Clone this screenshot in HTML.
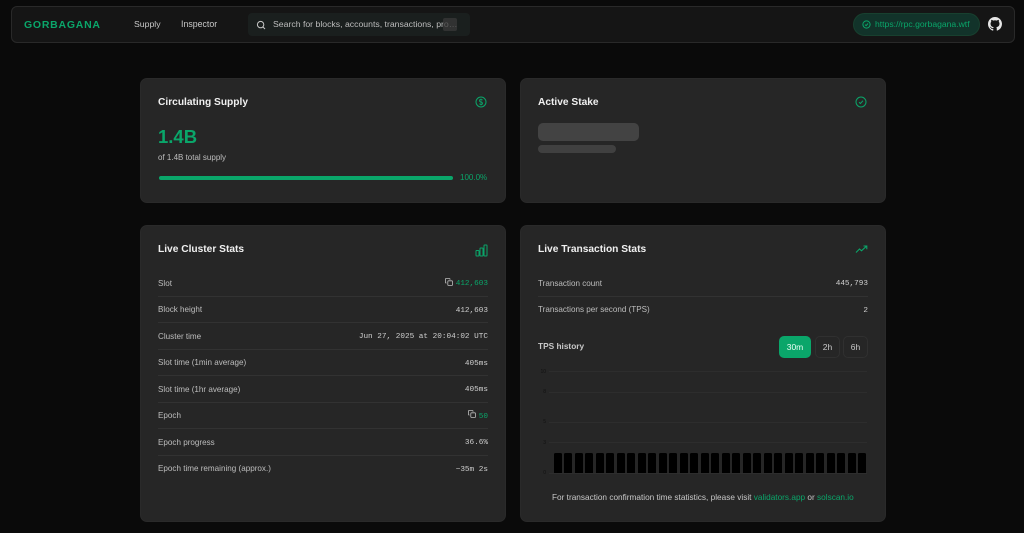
<!DOCTYPE html>
<html lang="en"><head><meta charset="utf-8"><title>Gorbagana</title>
<style>
*{box-sizing:border-box;margin:0;padding:0}
html,body{width:1024px;height:533px;overflow:hidden;background:#0a0a0a}
body{position:relative;font-family:"Liberation Sans",sans-serif;color:#c8c8c8}
.a{position:absolute;white-space:nowrap}
.card{position:absolute;width:366px;background:#262626;border:1px solid #2a2a2a;border-radius:7px}
.nav{position:absolute;left:11px;top:6px;width:1004px;height:37px;background:#151515;border:1px solid #292929;border-radius:6px}
.t{font-size:10.2px;font-weight:700;color:#f0f0f0;line-height:12px;margin-top:1px}
.l{font-size:8.1px;color:#bdbdbd;line-height:10px;margin-top:1px}
.v{font-family:"Liberation Mono",monospace;font-size:7.7px;color:#d0d0d0;line-height:10px;text-align:right;margin-top:1px}
.g{color:#0aa66a}
.hr{position:absolute;height:1px;background:#323232}
.gl{position:absolute;left:549px;width:318px;height:1px;background:#2d2d2d}
.yl{position:absolute;font-size:5px;color:#111;line-height:6px;width:10px;text-align:right;left:536px}
.btn{position:absolute;top:336px;height:22px;border:1px solid #303030;border-radius:5px;font-size:8.5px;line-height:20px;text-align:center;color:#c8c8c8}
.bar{position:absolute;top:453px;width:8px;height:20px;background:#000;border-radius:1.5px 1.5px 0 0}
svg{position:absolute;fill:none}
</style></head><body>

<div class="nav"></div>
<div class="a" style="left:24px;top:19px;font-size:10.5px;line-height:12px;font-weight:700;letter-spacing:.75px;color:#0aa66a">GORBAGANA</div>
<div class="a" style="left:134px;top:19px;font-size:8.7px;line-height:11px;color:#c8c8c8">Supply</div>
<div class="a" style="left:181px;top:19px;font-size:8.8px;line-height:11px;color:#c8c8c8">Inspector</div>
<div class="a" style="left:248px;top:13px;width:222px;height:23px;background:#1a1f1e;border-radius:4px"></div>
<svg style="left:256px;top:20px" width="10" height="10" viewBox="0 0 10 10" stroke="#c8c8c8" stroke-width="1"><circle cx="4.6" cy="4.6" r="3.2"/><path d="M7 7l2 2"/></svg>
<div class="a" style="left:273px;top:19px;font-size:8.7px;line-height:11px;color:#bdbdbd;width:184px;overflow:hidden">Search for blocks, accounts, transactions, pro…</div>
<div class="a" style="left:443px;top:18px;width:14px;height:13px;background:#3a3a3a;opacity:.75;border-radius:2px"></div>

<div class="a" style="left:853px;top:13px;width:127px;height:23px;background:#12332a;border:1px solid #18402f;border-radius:12px"></div>
<svg style="left:862px;top:20px" width="9" height="9" viewBox="0 0 9 9" stroke="#0aa66a" stroke-width="1"><circle cx="4.5" cy="4.5" r="3.6"/><path d="M3 4.6l1.1 1.1L6 3.5"/></svg>
<div class="a g" style="left:875px;top:19px;font-size:8.6px;line-height:11px">https://rpc.gorbagana.wtf</div>
<svg style="left:988px;top:17px;fill:#e6e6e6" width="14" height="14" viewBox="0 0 16 16"><path d="M8 0C3.58 0 0 3.58 0 8c0 3.54 2.29 6.53 5.47 7.59.4.07.55-.17.55-.38 0-.19-.01-.82-.01-1.49-2.01.37-2.53-.49-2.69-.94-.09-.23-.48-.94-.82-1.13-.28-.15-.68-.52-.01-.53.63-.01 1.08.58 1.23.82.72 1.21 1.87.87 2.33.66.07-.52.28-.87.51-1.07-1.78-.2-3.64-.89-3.64-3.95 0-.87.31-1.59.82-2.15-.08-.2-.36-1.02.08-2.12 0 0 .67-.21 2.2.82.64-.18 1.32-.27 2-.27s1.36.09 2 .27c1.53-1.04 2.2-.82 2.2-.82.44 1.1.16 1.92.08 2.12.51.56.82 1.27.82 2.15 0 3.07-1.87 3.75-3.65 3.95.29.25.54.73.54 1.48 0 1.07-.01 1.93-.01 2.2 0 .21.15.46.55.38A8.01 8.01 0 0016 8c0-4.42-3.58-8-8-8z"/></svg>

<!-- Circulating Supply -->
<div class="card" style="left:140px;top:78px;height:125px"></div>
<div class="a t" style="left:158px;top:96px">Circulating Supply</div>
<svg style="left:475px;top:96px" width="12" height="12" viewBox="0 0 12 12" stroke="#0aa66a" stroke-width="1"><circle cx="6" cy="6" r="5"/><path d="M7.6 4.2C7.2 3.6 6.6 3.4 6 3.4c-1 0-1.6.5-1.6 1.3C4.4 6.4 7.6 5.600 7.600 7.300c0 .8-.7 1.300-1.600 1.300-.7 0-1.300-.3-1.700-.9M6 2.600v6.800" stroke-width=".8"/></svg>
<div class="a g" style="left:158px;top:126px;font-size:18.5px;line-height:21px;font-weight:700">1.4B</div>
<div class="a" style="left:158px;top:153px;font-size:8px;line-height:10px;color:#bdbdbd">of 1.4B total supply</div>
<div class="a" style="left:159px;top:176px;width:294px;height:4px;background:#0aa66a;border-radius:2px"></div>
<div class="a g" style="left:460px;top:173px;font-size:8px;line-height:10px">100.0%</div>

<!-- Active Stake -->
<div class="card" style="left:520px;top:78px;height:125px"></div>
<div class="a t" style="left:538px;top:96px">Active Stake</div>
<svg style="left:855px;top:96px" width="12" height="12" viewBox="0 0 12 12" stroke="#0aa66a" stroke-width="1"><circle cx="6" cy="6" r="5"/><path d="M4 6.200l1.400 1.300L8 4.700"/></svg>
<div class="a" style="left:538px;top:123px;width:101px;height:18px;background:#434343;border-radius:5px"></div>
<div class="a" style="left:538px;top:145px;width:78px;height:8px;background:#404040;border-radius:4px"></div>

<!-- Live Cluster -->
<div class="card" style="left:140px;top:225px;height:297px"></div>
<div class="a t" style="left:158px;top:243px">Live Cluster Stats</div>
<svg style="left:475px;top:244px" width="13" height="13" viewBox="0 0 13 13" stroke="#0aa66a" stroke-width="1"><rect x="1" y="6.500" width="3" height="5.500" rx=".6"/><rect x="5" y="4" width="3" height="8" rx=".6"/><rect x="9" y="1" width="3" height="11" rx=".6"/></svg>

<div class="a l" style="left:158px;top:278px">Slot</div>
<svg style="left:445px;top:278px" width="8" height="8" viewBox="0 0 8 8" stroke="#bdbdbd" stroke-width=".8"><rect x="2.800" y="2.800" width="4.700" height="4.700" rx=".8"/><path d="M1.500 5H1a.6.6 0 01-.6-.6V1A.6.6 0 011 .5h3.400a.6.6 0 01.6.6v.6"/></svg>
<div class="a v" style="right:536px;top:278px;color:#0aa66a">412,603</div>
<div class="hr" style="left:158px;width:330px;top:296px"></div>

<div class="a l" style="left:158px;top:304px">Block height</div>
<div class="a v" style="right:536px;top:305px">412,603</div>
<div class="hr" style="left:158px;width:330px;top:322px"></div>

<div class="a l" style="left:158px;top:331px">Cluster time</div>
<div class="a v" style="right:536px;top:331px">Jun 27, 2025 at 20:04:02 UTC</div>
<div class="hr" style="left:158px;width:330px;top:349px"></div>

<div class="a l" style="left:158px;top:357px">Slot time (1min average)</div>
<div class="a v" style="right:536px;top:358px">405ms</div>
<div class="hr" style="left:158px;width:330px;top:375px"></div>

<div class="a l" style="left:158px;top:384px">Slot time (1hr average)</div>
<div class="a v" style="right:536px;top:384px">405ms</div>
<div class="hr" style="left:158px;width:330px;top:402px"></div>

<div class="a l" style="left:158px;top:410px">Epoch</div>
<svg style="left:468px;top:410px" width="8" height="8" viewBox="0 0 8 8" stroke="#bdbdbd" stroke-width=".8"><rect x="2.800" y="2.800" width="4.700" height="4.700" rx=".8"/><path d="M1.500 5H1a.6.6 0 01-.6-.6V1A.6.6 0 011 .5h3.400a.6.6 0 01.6.6v.6"/></svg>
<div class="a v" style="right:536px;top:411px;color:#0aa66a">50</div>
<div class="hr" style="left:158px;width:330px;top:428px"></div>

<div class="a l" style="left:158px;top:437px">Epoch progress</div>
<div class="a v" style="right:536px;top:437px">36.6%</div>
<div class="hr" style="left:158px;width:330px;top:455px"></div>

<div class="a l" style="left:158px;top:463px">Epoch time remaining (approx.)</div>
<div class="a v" style="right:536px;top:464px">~35m 2s</div>

<!-- Live Tx -->
<div class="card" style="left:520px;top:225px;height:297px"></div>
<div class="a t" style="left:538px;top:243px">Live Transaction Stats</div>
<svg style="left:855px;top:245px" width="13" height="9" viewBox="0 0 13 9" stroke="#0aa66a" stroke-width="1.100"><path d="M1 7.500l3.500-3.500 2 1.800L11.500 1.200M8.500 1h3.300v3.200"/></svg>

<div class="a l" style="left:538px;top:278px">Transaction count</div>
<div class="a v" style="right:156px;top:278px">445,793</div>
<div class="hr" style="left:538px;width:330px;top:296px"></div>
<div class="a l" style="left:538px;top:304px">Transactions per second (TPS)</div>
<div class="a v" style="right:156px;top:305px">2</div>

<div class="a" style="left:538px;top:341px;font-size:8.3px;font-weight:700;line-height:11px;color:#c8c8c8">TPS history</div>
<div class="btn" style="left:779px;width:32px;background:#0aa66a;border-color:#0aa66a;color:#eafff5">30m</div>
<div class="btn" style="left:815px;width:25px">2h</div>
<div class="btn" style="left:843px;width:25px">6h</div>

<div class="gl" style="top:371px"></div>
<div class="gl" style="top:392px"></div>
<div class="gl" style="top:422px"></div>
<div class="gl" style="top:442px"></div>
<div class="gl" style="top:473px"></div>
<div class="yl" style="top:369px">10</div>
<div class="yl" style="top:389px">8</div>
<div class="yl" style="top:419px">5</div>
<div class="yl" style="top:440px">3</div>
<div class="yl" style="top:470px">0</div>

<div class="bar" style="left:553.5px"></div><div class="bar" style="left:564px"></div><div class="bar" style="left:574.5px"></div><div class="bar" style="left:585px"></div><div class="bar" style="left:595.5px"></div><div class="bar" style="left:606px"></div><div class="bar" style="left:616.5px"></div><div class="bar" style="left:627px"></div><div class="bar" style="left:637.5px"></div><div class="bar" style="left:648px"></div><div class="bar" style="left:658.5px"></div><div class="bar" style="left:669px"></div><div class="bar" style="left:679.5px"></div><div class="bar" style="left:690px"></div><div class="bar" style="left:700.5px"></div><div class="bar" style="left:711px"></div><div class="bar" style="left:721.5px"></div><div class="bar" style="left:732px"></div><div class="bar" style="left:742.5px"></div><div class="bar" style="left:753px"></div><div class="bar" style="left:763.5px"></div><div class="bar" style="left:774px"></div><div class="bar" style="left:784.5px"></div><div class="bar" style="left:795px"></div><div class="bar" style="left:805.5px"></div><div class="bar" style="left:816px"></div><div class="bar" style="left:826.500px"></div><div class="bar" style="left:837px"></div><div class="bar" style="left:847.500px"></div><div class="bar" style="left:858px"></div>

<div class="a" style="left:552px;top:492px;font-size:8.25px;line-height:11px;color:#c8c8c8">For transaction confirmation time statistics, please visit <span class="g">validators.app</span> or <span class="g">solscan.io</span></div>

</body></html>
